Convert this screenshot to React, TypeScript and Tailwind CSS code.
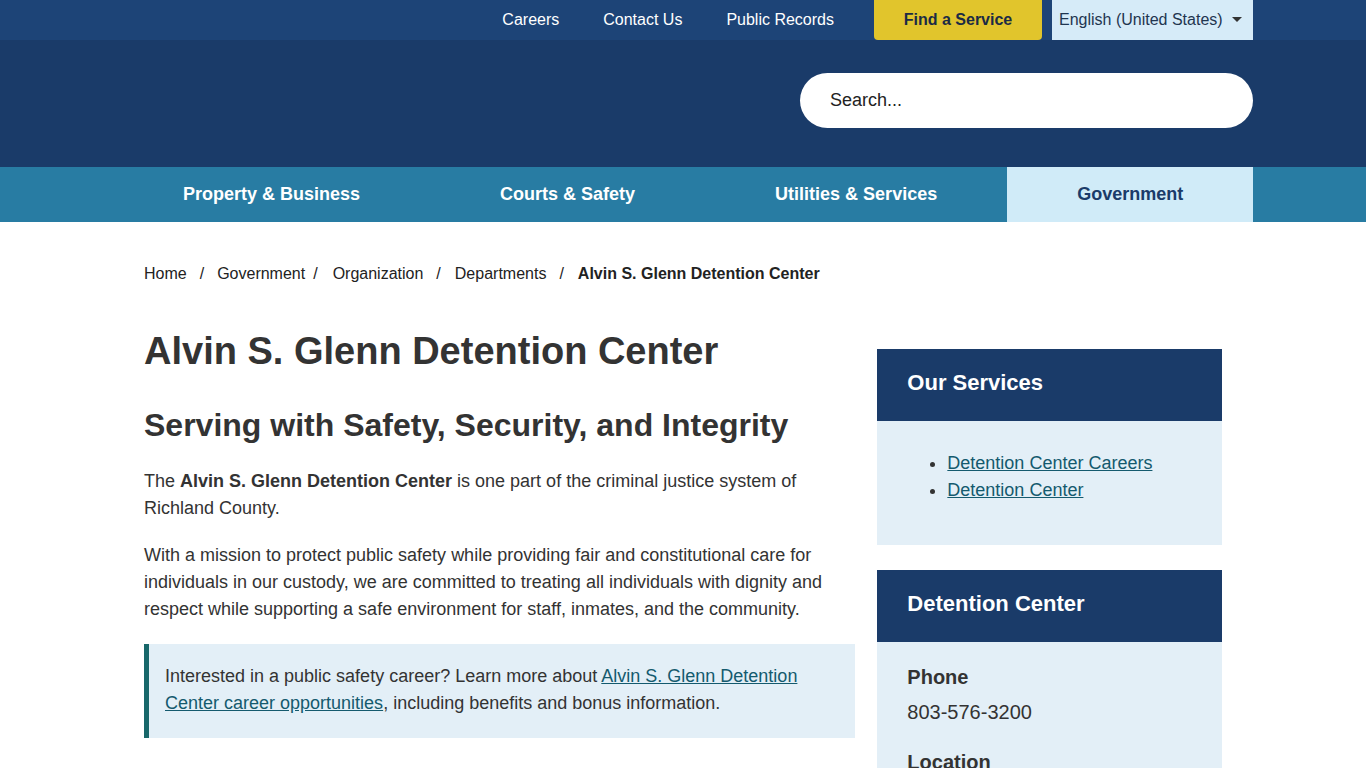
import React from "react";

const font = { fontFamily: '"Liberation Sans", Arial, sans-serif' };

function TopBar() {
  return (
    <div className="bg-[#1d4477] h-[40px]">
      <div className="w-[1140px] mx-auto flex justify-end items-stretch h-full">
        <nav className="flex items-center text-[16px] text-white">
          <a className="px-[22px]">Careers</a>
          <a className="px-[22px]">Contact Us</a>
          <a className="px-[22px]">Public Records</a>
        </nav>
        <a className="ml-[18px] bg-[#e1c52c] text-[#1b2b45] font-bold text-[16px] w-[168px] flex items-center justify-center rounded-b-[4px]">
          Find a Service
        </a>
        <div className="ml-[10px] w-[201px] bg-[#d6ebf8] text-[#1f3550] text-[16px] flex items-center justify-between pl-[7px] pr-[11px]">
          <span>English (United States)</span>
          <svg width="10" height="6" viewBox="0 0 10 6">
            <path d="M0 0h10L5 5z" fill="#333" />
          </svg>
        </div>
      </div>
    </div>
  );
}

function Header() {
  return (
    <div className="bg-[#1a3b69] h-[127px]">
      <div className="w-[1140px] mx-auto flex justify-end pt-[33px]">
        <div className="w-[453px] h-[55px] bg-white rounded-full flex items-center pl-[30px] text-[18px] text-[#222]">
          Search...
        </div>
      </div>
    </div>
  );
}

function MainNav() {
  const items = ["Property & Business", "Courts & Safety", "Utilities & Services"];
  return (
    <div className="bg-[#287ca3] h-[55px]">
      <div className="w-[1140px] mx-auto flex h-full">
        {items.map((t) => (
          <a key={t} className="shrink-0 whitespace-nowrap px-[70px] flex items-center text-white font-bold text-[18px]">
            {t}
          </a>
        ))}
        <a className="ml-auto shrink-0 whitespace-nowrap flex items-center bg-[#d0ebf8] text-[#1a3b69] font-bold text-[18px] w-[246px] justify-center">
          Government
        </a>
      </div>
    </div>
  );
}

function Breadcrumb() {
  return (
    <div className="flex items-center text-[16px] text-[#222] pt-[40px]">
      <span>Home</span>
      <span className="px-[13px]">/</span>
      <span>Government</span>
      <span className="pl-[8px] pr-[15px]">/</span>
      <span>Organization</span>
      <span className="pl-[13px] pr-[14px]">/</span>
      <span>Departments</span>
      <span className="pl-[13px] pr-[14px]">/</span>
      <span className="font-bold">Alvin S. Glenn Detention Center</span>
    </div>
  );
}

function SideCard({ title, children }: { title: string; children: React.ReactNode }) {
  return (
    <div>
      <div className="bg-[#1a3b69] h-[72px] flex items-center px-[30px] pb-[6px]">
        <h3 className="text-white font-bold text-[22px]">{title}</h3>
      </div>
      <div className="bg-[#e3eff7]">{children}</div>
    </div>
  );
}

export default function App() {
  return (
    <div style={font} className="bg-white min-h-screen">
      <TopBar />
      <Header />
      <MainNav />
      <div className="w-[1140px] mx-auto px-[31px]">
        <Breadcrumb />
        <div className="flex gap-[22px] mt-[33px]">
          <main className="w-[712px] text-[#333]">
            <h1 className="text-[38px] font-bold leading-[46px] mt-[9px]">Alvin S. Glenn Detention Center</h1>
            <h2 className="text-[32px] font-bold leading-[40px] mt-[31px]">
              Serving with Safety, Security, and Integrity
            </h2>
            <p className="text-[18px] leading-[27px] mt-[23px]">
              The <strong>Alvin S. Glenn Detention Center</strong> is one part of the criminal justice system of Richland County.
            </p>
            <p className="text-[18px] leading-[27px] mt-[20px] pr-[30px]">
              With a mission to protect public safety while providing fair and constitutional care for individuals in our custody, we are committed to treating all individuals with dignity and respect while supporting a safe environment for staff, inmates, and the community.
            </p>
            <div className="mt-[21px] bg-[#e3eff7] border-l-[5px] border-[#17676a] pl-[16px] pr-[50px] pt-[19px] pb-[21px] text-[18px] leading-[27px]">
              Interested in a public safety career? Learn more about{" "}
              <a className="text-[#145a6e] underline">Alvin S. Glenn Detention Center career opportunities</a>, including benefits and bonus information.
            </div>
          </main>
          <aside className="w-[345px] flex flex-col gap-[25px] mt-[30px]">
            <SideCard title="Our Services">
              <ul className="list-disc pl-[70px] pt-[29px] pb-[41px] text-[18px] leading-[27px] text-[#145a6e] marker:text-[#333]">
                <li><a className="underline">Detention Center Careers</a></li>
                <li><a className="underline">Detention Center</a></li>
              </ul>
            </SideCard>
            <SideCard title="Detention Center">
              <div className="px-[30px] pt-[22px] pb-[30px] text-[#333]">
                <div className="font-bold text-[20px] leading-[26px]">Phone</div>
                <div className="text-[20px] leading-[26px] mt-[9px]">803-576-3200</div>
                <div className="font-bold text-[20px] leading-[26px] mt-[24px]">Location</div>
                <div className="text-[20px] leading-[26px] mt-[9px]">201 John Mark Dial Drive</div>
              </div>
            </SideCard>
          </aside>
        </div>
      </div>
    </div>
  );
}
